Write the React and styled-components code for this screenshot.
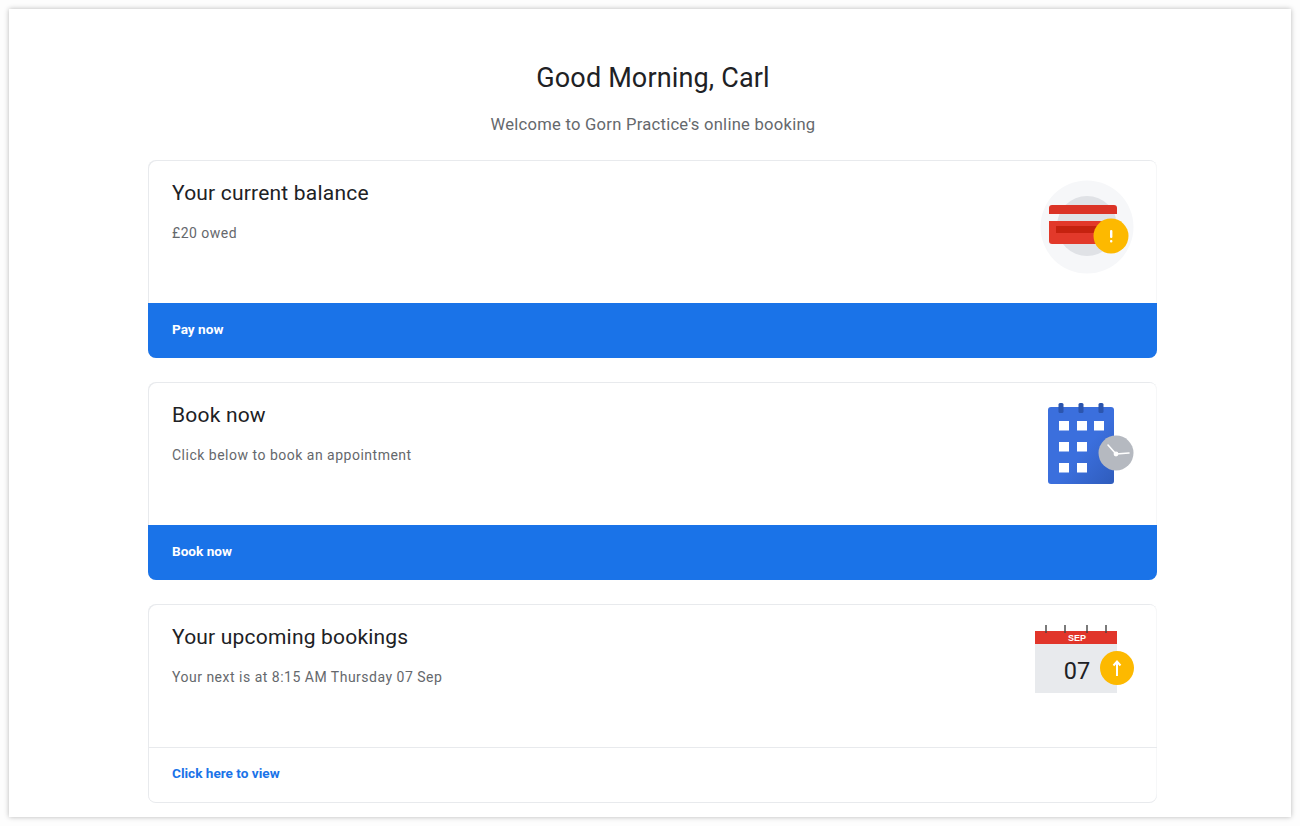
import React from "react";
import styled, { createGlobalStyle } from "styled-components";

const Global = createGlobalStyle`
  html, body { margin: 0; padding: 0; background: #fff; }
  body { font-family: Roboto, "Liberation Sans", sans-serif; }
`;
const Page = styled.div`
  width: 1300px; height: 826px; box-sizing: border-box; padding: 9px; background: #fdfdfd; overflow: hidden;
`;
const Frame = styled.main`
  width: 1282px; height: 808px; box-sizing: border-box; background: #fff;
  box-shadow: 0 0 5px rgba(0,0,0,.28);
  padding: 51px 133px 0 139px;
  display: flex; flex-direction: column;
`;
const Heading = styled.h1`
  margin: 0; text-align: center; font-size: 27px; line-height: 36px; font-weight: 400; color: #202124; letter-spacing: 0.15px;
`;
const Sub = styled.p`
  margin: 17px 0 0; text-align: center; font-size: 16.6px; line-height: 24px; color: #65686c; letter-spacing: 0.25px;
`;
const Cards = styled.div`
  margin-top: 23px; display: flex; flex-direction: column; gap: 24px;
`;
const Card = styled.section`
  box-sizing: border-box; height: ${p => p.$h}px; width: 1009px;
  box-shadow: inset 1px 1px 0 #e8eaed, inset 0 -1px 0 #e8eaed, inset -1px 0 0 #f6f7f8;
  border-radius: 8px;
  display: flex; flex-direction: column; overflow: hidden; background: #fff;
`;
const Body = styled.div`
  flex: 1; display: flex; justify-content: space-between; padding: 19px 24px 0;
`;
const Title = styled.h2`
  margin: 0; font-size: 21px; line-height: 28px; font-weight: 400; color: #202124; letter-spacing: 0.2px;
`;
const Text = styled.p`
  margin: 16px 0 0; font-size: 14px; line-height: 20px; color: #65686c; letter-spacing: 0.5px;
`;
const IconSlot = styled.div`
  width: 100px; height: 100px; margin: ${p => p.$mt || 0}px -2px 0 0; flex: none;
`;
const PrimaryAction = styled.a`
  display: flex; align-items: center; box-sizing: border-box; height: 55px; flex: none;
  padding: 0 0 3px 24px;
  background: #1a73e8; color: #fff; font-size: 13.6px; font-weight: 700;
`;
const LinkAction = styled.a`
  display: flex; align-items: center; box-sizing: border-box; height: 56px; flex: none;
  padding: 0 0 5px 24px;
  border-top: 1px solid #e8eaed; color: #1a73e8; font-size: 13.6px; font-weight: 700;
`;
const Month = styled.text`
  font: 700 9px "Liberation Sans", Arial, sans-serif; fill: #fff; text-anchor: middle;
`;
const Day = styled.text`
  font: 400 23.5px Roboto, sans-serif; fill: #202124; text-anchor: middle;
`;

const CardIcon = () => (
  <svg width="100" height="100" viewBox="0 0 100 100">
    <circle cx="52" cy="47" r="46.5" fill="#f6f7f9" />
    <circle cx="52" cy="46" r="30" fill="#e0e2e6" />
    <path d="M14 28a3 3 0 0 1 3-3h62a3 3 0 0 1 3 3v6H14z" fill="#db3326" />
    <path d="M14 41h68v20a3 3 0 0 1-3 3H17a3 3 0 0 1-3-3z" fill="#e2392a" />
    <rect x="21" y="46" width="50" height="7" fill="#c5220f" />
    <circle cx="76" cy="56" r="17.5" fill="#fdb900" />
    <rect x="75" y="50" width="2.4" height="8" rx="1" fill="#fff" />
    <rect x="75" y="60" width="2.4" height="2.4" rx="1" fill="#fff" />
  </svg>
);
const BookIcon = () => (
  <svg width="100" height="100" viewBox="0 0 100 100">
    <defs>
      <linearGradient id="bk" x1="0" y1="0" x2="1" y2="1">
        <stop offset="0.55" stopColor="#3b6fdd" />
        <stop offset="1" stopColor="#2f5cbc" />
      </linearGradient>
    </defs>
    <rect x="13" y="6" width="66" height="77" rx="3" fill="url(#bk)" />
    {[26, 46, 66].map(x => <rect key={x} x={x - 2.5} y="2" width="5" height="10" rx="1.5" fill="#2b55ae" />)}
    {[[24,20],[42,20],[59,20],[24,41],[42,41],[24,62],[42,62]].map(([x,y]) => (
      <rect key={`${x}-${y}`} x={x} y={y} width="10" height="9.5" fill="#fff" />
    ))}
    <circle cx="81" cy="52" r="17.5" fill="#b5b9c0" />
    <path d="M81 53L73 44M81 53L94 52" stroke="#fff" strokeWidth="1.6" fill="none" strokeLinecap="round" />
    <circle cx="81" cy="53" r="2.4" fill="#fff" />
  </svg>
);
const UpcomingIcon = () => (
  <svg width="100" height="100" viewBox="0 0 100 100">
    <rect x="0" y="19" width="82" height="49" fill="#e8eaed" />
    <rect x="0" y="6" width="82" height="13" fill="#e1352a" />
    {[11, 30, 52, 71].map(x => <rect key={x} x={x - 0.7} y="0" width="1.4" height="8" fill="#444" />)}
    <Month x="42" y="16">SEP</Month>
    <Day x="42" y="53.5">07</Day>
    <circle cx="82" cy="43" r="17" fill="#fdb900" />
    <path d="M82 51V37M78.5 40.5L82 36.5l3.5 4" stroke="#fff" strokeWidth="2" fill="none" />
  </svg>
);

export default function App() {
  return (
    <Page>
      <Global />
      <Frame>
        <Heading>Good Morning, Carl</Heading>
        <Sub>Welcome to Gorn Practice's online booking</Sub>
        <Cards>
          <Card $h={198}>
            <Body>
              <div><Title>Your current balance</Title><Text>£20 owed</Text></div>
              <IconSlot $mt={1}><CardIcon /></IconSlot>
            </Body>
            <PrimaryAction>Pay now</PrimaryAction>
          </Card>
          <Card $h={198}>
            <Body>
              <div><Title>Book now</Title><Text>Click below to book an appointment</Text></div>
              <IconSlot><BookIcon /></IconSlot>
            </Body>
            <PrimaryAction>Book now</PrimaryAction>
          </Card>
          <Card $h={199}>
            <Body>
              <div><Title>Your upcoming bookings</Title><Text>Your next is at 8:15 AM Thursday 07 Sep</Text></div>
              <IconSlot $mt={2}><UpcomingIcon /></IconSlot>
            </Body>
            <LinkAction>Click here to view</LinkAction>
          </Card>
        </Cards>
      </Frame>
    </Page>
  );
}
